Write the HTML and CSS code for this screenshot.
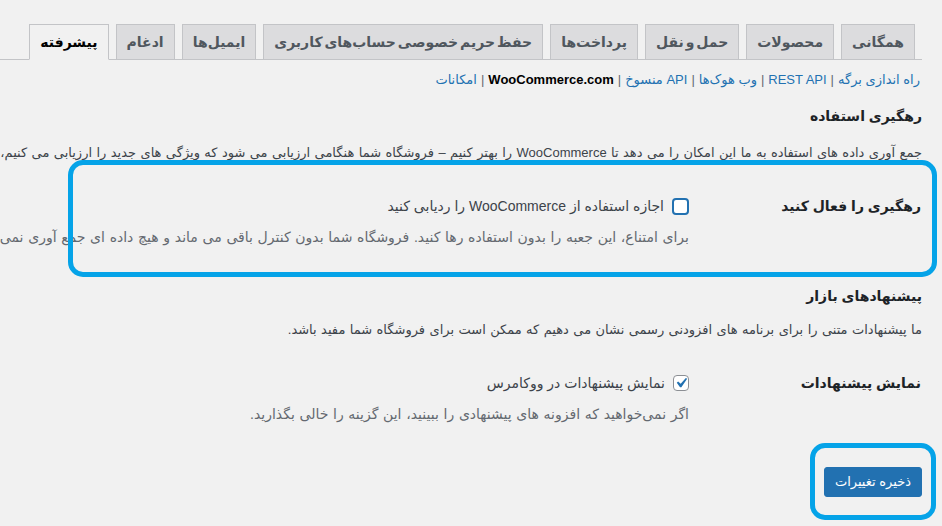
FILE: index.html
```html
<!DOCTYPE html>
<html lang="fa" dir="rtl">
<head>
<meta charset="utf-8">
<title>تنظیمات پیشرفته</title>
<link rel="stylesheet" href="styles.css">
</head>
<body>
<div class="wrap">
  <nav class="nav-tabs">
    <a class="nav-tab" href="#">همگانی</a>
    <a class="nav-tab" href="#">محصولات</a>
    <a class="nav-tab" href="#">حمل و نقل</a>
    <a class="nav-tab" href="#">پرداخت‌ها</a>
    <a class="nav-tab" href="#">حفظ حریم خصوصی حساب‌های کاربری</a>
    <a class="nav-tab" href="#">ایمیل‌ها</a>
    <a class="nav-tab" href="#">ادغام</a>
    <a class="nav-tab active" href="#">پیشرفته</a>
  </nav>

  <ul class="subsubsub">
    <li><a href="#">راه اندازی برگه</a><span class="sep">|</span></li>
    <li><a href="#">REST API</a><span class="sep">|</span></li>
    <li><a href="#">وب هوک‌ها</a><span class="sep">|</span></li>
    <li><a href="#">API منسوخ</a><span class="sep">|</span></li>
    <li><a href="#" class="current">WooCommerce.com</a><span class="sep">|</span></li>
    <li><a href="#">امکانات</a></li>
  </ul>

  <h2 class="section-title">رهگیری استفاده</h2>
  <p class="intro">جمع آوری داده های استفاده به ما این امکان را می دهد تا WooCommerce را بهتر کنیم – فروشگاه شما هنگامی ارزیابی می شود که ویژگی های جدید را ارزیابی می کنیم، کیفیت به روزرسانی ها را ارزیابی می کنیم یا تصمیم می گیریم که کدام بهبود در اولویت است.</p>

  <div class="form-row">
    <div class="row-label">رهگیری را فعال کنید</div>
    <div class="row-field">
      <label class="check"><span class="box box-focus"></span><span>اجازه استفاده از WooCommerce را ردیابی کنید</span></label>
      <p class="desc">برای امتناع، این جعبه را بدون استفاده رها کنید. فروشگاه شما بدون کنترل باقی می ماند و هیچ داده ای جمع آوری نمی شود.</p>
    </div>
  </div>

  <h2 class="section-title section-title-2">پیشنهادهای بازار</h2>
  <p class="intro intro-2">ما پیشنهادات متنی را برای برنامه های افزودنی رسمی نشان می دهیم که ممکن است برای فروشگاه شما مفید باشد.</p>

  <div class="form-row">
    <div class="row-label">نمایش پیشنهادات</div>
    <div class="row-field">
      <label class="check"><span class="box box-checked"><svg viewBox="0 0 20 20" width="20" height="20"><path d="M14.83 4.89l1.34.94-5.81 8.38H9.02L5.78 9.67l1.34-1.25 2.57 2.4z" fill="#2271b1"/></svg></span><span>نمایش پیشنهادات در ووکامرس</span></label>
      <p class="desc">اگر نمی‌خواهید که افزونه های پیشنهادی را ببینید، این گزینه را خالی بگذارید.</p>
    </div>
  </div>

  <p class="submit"><button class="button-primary" type="button">ذخیره تغییرات</button></p>
</div>

<div class="mark mark-tracking"></div>
<div class="mark mark-save"></div>
</body>
</html>
```

FILE: styles.css
```css
html, body {
  margin: 0;
  height: 100%;
}
body {
  background: #f1f1f1;
  font-family: "Liberation Sans", "DejaVu Sans", sans-serif;
  font-size: 13px;
  color: #3c434a;
  direction: rtl;
  overflow: hidden;
  position: relative;
}
.wrap {
  padding: 24px 20px 0 0;
  overflow: hidden;
}
.nav-tabs {
  display: flex;
  border-bottom: 1px solid #c3c4c7;
}
.nav-tab {
  margin-right: 7px;
  margin-bottom: -1px;
  padding: 5px 10px;
  border: 1px solid #c3c4c7;
  background: #dcdcde;
  color: #50575e;
  font-size: 14px;
  font-weight: bold;
  line-height: 24px;
  word-spacing: -2px;
  text-decoration: none;
  white-space: nowrap;
}
.nav-tab.active {
  background: #f1f1f1;
  border-bottom-color: #f1f1f1;
  color: #000;
}
.subsubsub {
  display: flex;
  list-style: none;
  margin: 7px 0 0;
  padding: 0 2px 0 0;
  line-height: 26px;
  font-size: 13px;
  color: #646970;
}
.subsubsub li {
  white-space: nowrap;
}
.subsubsub a {
  color: #2271b1;
  text-decoration: none;
}
.subsubsub a.current {
  color: #000;
  font-weight: bold;
}
.sep {
  margin: 0 4px;
}
.section-title {
  margin: 13px 0 0;
  font-size: 14px;
  font-weight: bold;
  line-height: 20px;
  color: #1d2327;
}
.section-title-2 {
  margin-top: 24px;
}
.intro {
  margin: 17px 0 0;
  line-height: 20px;
  word-spacing: 0.8px;
  white-space: nowrap;
}
.intro-2 {
  margin-top: 14px;
}
.form-row {
  display: grid;
  grid-template-columns: 233px 1fr;
  padding: 33px 0 15px;
}
.row-label {
  font-size: 14px;
  font-weight: bold;
  line-height: 20px;
  color: #1d2327;
  padding-right: 1px;
}
.row-field {
  min-width: 0;
}
.check {
  display: flex;
  align-items: center;
  gap: 8px;
  font-size: 14px;
  line-height: 20px;
  color: #3c434a;
  white-space: nowrap;
}
.box {
  width: 16px;
  height: 16px;
  box-sizing: border-box;
  border: 1px solid #8c8f94;
  border-radius: 4px;
  background: #fff;
  display: flex;
  align-items: center;
  justify-content: center;
  flex: none;
  overflow: hidden;
}
.box svg {
  width: 20px;
  height: 20px;
  flex: none;
}
.box-focus {
  width: 17px;
  height: 17px;
  border: 2px solid #2271b1;
}
.desc {
  margin: 11px 0 0;
  font-size: 14px;
  line-height: 20px;
  word-spacing: 0.8px;
  color: #646970;
  white-space: nowrap;
}
.submit {
  margin: 28px 0 0;
}
.button-primary {
  height: 30px;
  padding: 0 10px;
  background: #2271b1;
  border: 1px solid #2271b1;
  border-radius: 3px;
  color: #fff;
  font-family: "Liberation Sans", "DejaVu Sans", sans-serif;
  font-size: 13px;
  line-height: 28px;
}
.mark {
  position: absolute;
  box-sizing: border-box;
  border: 5px solid #05a3e8;
  border-radius: 15px;
  pointer-events: none;
}
.mark-tracking {
  left: 68px;
  top: 160px;
  width: 869px;
  height: 117px;
}
.mark-save {
  left: 810px;
  top: 443px;
  width: 126px;
  height: 77px;
}
```
